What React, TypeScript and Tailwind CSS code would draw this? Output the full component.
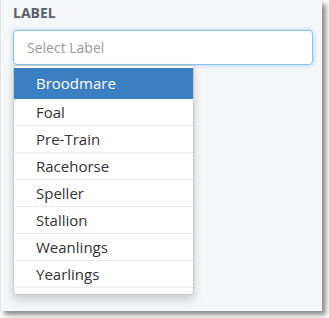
import React from "react";

const options = ["Broodmare", "Foal", "Pre-Train", "Racehorse", "Speller", "Stallion", "Weanlings", "Yearlings"];

export default function App() {
  return (
    <div className="w-[329px] h-[318px] bg-white" style={{ fontFamily: '"Open Sans", "Liberation Sans", sans-serif' }}>
      <div className="relative w-[322px] h-[311px] bg-[#f6f7f9] border-l border-[#e4e6ea] shadow-[4px_4px_5px_rgba(0,0,0,0.45)] px-3 pt-[3px]">
        <div className="text-[14px] font-bold text-[#56606a] leading-[20px]">LABEL</div>
        <div className="relative mt-[7px]">
          <div className="h-[35px] w-[300px] bg-white border border-[#8cc2ef] rounded-[4px] shadow-[0_0_5px_rgba(102,175,233,0.55)] flex items-center pl-[13px] text-[14px] text-[#999]">
            Select Label
          </div>
          <div className="absolute left-0 top-[35px] w-[181px] bg-white border border-[#c9cbce] rounded-b-[4px] shadow-[0_5px_10px_rgba(0,0,0,0.18)] pt-[2px] pb-[6px]">
            {options.map((o, i) => (
              <div
                key={o}
                className={
                  i === 0
                    ? "h-[31px] flex items-center pl-[22px] bg-[#3a7fc1] text-white text-[15px]"
                    : "h-[27px] flex items-center pl-[22px] text-[15px] text-[#333] border-b border-dotted border-[#dcdcdc]"
                }
              >
                {o}
              </div>
            ))}
          </div>
        </div>
      </div>
    </div>
  );
}
